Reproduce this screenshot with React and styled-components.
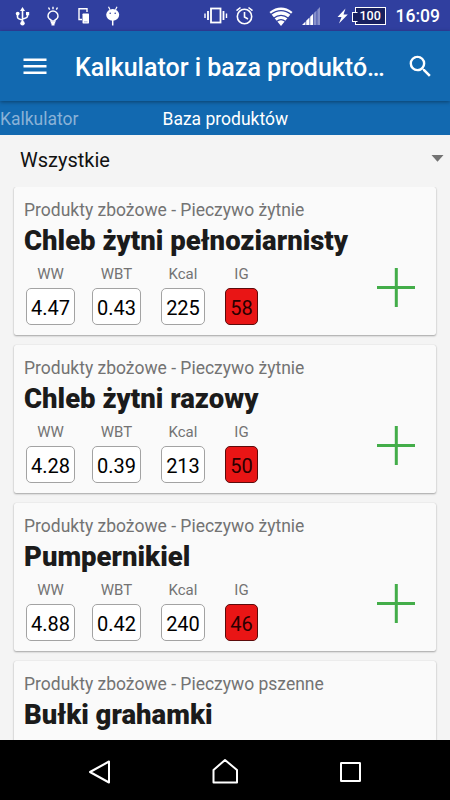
import React from "react"
import styled, { createGlobalStyle } from "styled-components"

const GlobalStyle = createGlobalStyle`
  * {
    box-sizing: border-box;
  }
  body {
    margin: 0;
    font-family: Roboto, "Noto Sans", sans-serif;
  }
  svg {
    display: block;
    flex: none;
  }
`

const StyledScreen = styled.div`
  display: flex;
  flex-direction: column;
  width: 450px;
  height: 800px;
  overflow: hidden;
  background-color: #f4f4f4;
`

const StyledStatusBar = styled.div`
  display: flex;
  align-items: center;
  flex: none;
  height: 31px;
  background-color: #303f9f;
  color: #fff;
`

const StyledNotifications = styled.div`
  display: flex;
  align-items: center;
  flex: 1;
  gap: 15px;
  padding-left: 15px;
`

const StyledSystem = styled.div`
  display: flex;
  align-items: center;
  padding-right: 10px;
`

const StyledNetwork = styled.div`
  display: flex;
  align-items: center;
  gap: 9px;
  margin: 0 17px 0 15px;
`

const StyledAlerts = styled.div`
  display: flex;
  align-items: center;
  gap: 7px;
`

const StyledBattery = styled.div`
  display: flex;
  align-items: center;
  justify-content: center;
  position: relative;
  width: 31px;
  height: 18px;
  margin-left: 7px;
  border: 1.5px solid #fff;
  background-color: #18205f;
  font-size: 12.5px;
  font-weight: 500;
  line-height: 16px;
  &::before {
    content: "";
    position: absolute;
    left: -4px;
    top: 4px;
    width: 4px;
    height: 8px;
    border: 1px solid #fff;
    border-right-color: #18205f;
    background-color: #18205f;
  }
`

const StyledClock = styled.span`
  margin-left: 10px;
  font-size: 17.5px;
  line-height: 31px;
  font-weight: 500;
  padding-top: 2px;
`

const StyledAppBar = styled.header`
  display: flex;
  align-items: center;
  flex: none;
  position: relative;
  height: 70px;
  padding: 0 15px 0 21px;
  background-color: #1269b0;
  color: #fff;
  box-shadow: 0 1px 4px rgba(0, 0, 0, 0.4);
`

const StyledHeading = styled.h1`
  flex: 1;
  margin: 4px 18px 0 26px;
  font-size: 25px;
  font-weight: 500;
  line-height: 34px;
  white-space: nowrap;
`

const StyledTabs = styled.nav`
  display: flex;
  flex: none;
  height: 34px;
  background-color: #1269b0;
`

const StyledTab = styled.div`
  width: ${(props) => (props.$active ? "125px" : "162.5px")};
  padding-top: 1px;
  font-size: 17.5px;
  line-height: 34px;
  white-space: nowrap;
  color: ${(props) => (props.$active ? "#fff" : "#8ab2d7")};
`

const StyledSelect = styled.div`
  display: flex;
  align-items: center;
  justify-content: space-between;
  flex: none;
  height: 52px;
  padding: 0 6px 3px 20px;
  font-size: 20px;
  color: #111;
  svg {
    margin-bottom: 2px;
  }
`

const StyledList = styled.main`
  display: flex;
  flex-direction: column;
  flex: 1;
  gap: 10px;
  min-height: 0;
  padding: 0 14px;
  overflow: hidden;
`

const StyledCard = styled.article`
  display: flex;
  flex: none;
  height: 148px;
  padding: 11px 20px 0 10px;
  border-radius: 2px;
  background-color: #fafafa;
  box-shadow: 0 1px 2px rgba(0, 0, 0, 0.32), 0 0 1px rgba(0, 0, 0, 0.16);
`

const StyledInfo = styled.div`
  flex: 1;
  white-space: nowrap;
`

const StyledCategory = styled.p`
  margin: 0;
  font-size: 17.5px;
  line-height: 24px;
  color: #737373;
`

const StyledName = styled.h2`
  margin: 0;
  font-size: 27.5px;
  font-weight: 900;
  line-height: 38px;
  color: #1b1b1b;
`

const StyledValues = styled.div`
  display: flex;
  margin: 4px 0 0 2px;
`

const StyledValue = styled.div`
  display: flex;
  flex-direction: column;
  align-items: center;
  margin-right: ${(props) => props.$gap}px;
  span {
    font-size: 15px;
    line-height: 20px;
    color: #737373;
  }
  strong {
    width: ${(props) => props.$width}px;
    height: 37px;
    margin-top: 4px;
    border: 1px solid ${(props) => (props.$alert ? "#5c0b0b" : "#a3a3a3")};
    border-radius: 5px;
    background-color: ${(props) => (props.$alert ? "#e91515" : "#fff")};
    font-size: 20px;
    font-weight: 400;
    line-height: 38px;
    text-align: center;
    color: ${(props) => (props.$alert ? "#2a0000" : "#000")};
  }
`

const StyledAdd = styled.div`
  margin-top: 70px;
`

const StyledNavBar = styled.footer`
  display: flex;
  align-items: center;
  justify-content: center;
  gap: 98px;
  flex: none;
  height: 60px;
  padding-top: 4px;
  background-color: #000;
`

const products = [
  { category: "Produkty zbożowe - Pieczywo żytnie", name: "Chleb żytni pełnoziarnisty", ww: "4.47", wbt: "0.43", kcal: "225", ig: "58" },
  { category: "Produkty zbożowe - Pieczywo żytnie", name: "Chleb żytni razowy", ww: "4.28", wbt: "0.39", kcal: "213", ig: "50" },
  { category: "Produkty zbożowe - Pieczywo żytnie", name: "Pumpernikiel", ww: "4.88", wbt: "0.42", kcal: "240", ig: "46" },
  { category: "Produkty zbożowe - Pieczywo pszenne", name: "Bułki grahamki" },
]

function StatusBar() {
  return (
    <StyledStatusBar>
      <StyledNotifications>
        <svg width="16" height="20" viewBox="0 0 16 20" fill="none" stroke="#fff" strokeWidth="1.6">
          <path d="M7.5 4v12M2.5 8v3q0 2 5 3M12.5 8v2q0 2-5 3" />
          <path d="M7.5 1L10 5H5zM11 6h3.2v3.2H11z" fill="#fff" stroke="none" />
          <circle cx="2.7" cy="7.6" r="1.9" fill="#fff" stroke="none" />
          <circle cx="7.5" cy="17.3" r="2.2" fill="#fff" stroke="none" />
        </svg>
        <svg width="16" height="20" viewBox="0 0 16 20" fill="none" stroke="#fff" strokeWidth="1.4">
          <path d="M5 15v-1C3 13 2 11.6 2 10a5 5 0 0 1 10 0c0 1.6-1 3-3 4v1z" />
          <path d="M4.8 16.5h4.4M5.5 18.5h3" strokeWidth="2" />
          <path d="M7 .7v2.6M2.5 1.5l1.2 2.2M11.5 1.5l-1.2 2.2" />
        </svg>
        <svg width="13" height="20" viewBox="0 0 13 20">
          <path d="M5 13.5H2V2.7h8V6" fill="none" stroke="#fff" strokeWidth="1.4" />
          <rect x="5.5" y="7.5" width="6.5" height="10" rx="0.7" fill="#fff" />
          <path d="M7 15.8h3.5" stroke="#9ba3d4" strokeWidth="0.8" />
        </svg>
        <svg width="16" height="20" viewBox="0 0 16 20">
          <path d="M3.5.8l1.5 3M12 .8l-1.5 3" stroke="#fff" strokeWidth="1.2" />
          <ellipse cx="7.7" cy="8.8" rx="6.5" ry="5.9" fill="#fff" />
          <circle cx="5.2" cy="7.2" r="0.8" fill="#303f9f" />
          <circle cx="10.2" cy="7.2" r="0.8" fill="#303f9f" />
          <path d="M7.7 14v5.5" stroke="#fff" strokeWidth="1.5" />
        </svg>
      </StyledNotifications>
      <StyledSystem>
        <StyledAlerts>
          <svg width="24" height="20" viewBox="0 0 24 20" fill="none" stroke="#fff">
            <rect x="7" y="2.5" width="9.5" height="14" strokeWidth="1.8" />
            <path d="M4 5v9M19.5 5v9" strokeWidth="1.8" />
            <path d="M1 7.5v4.5M22.5 7.5v4.5" strokeWidth="1.4" />
          </svg>
          <svg width="19" height="20" viewBox="0 0 19 20" fill="none" stroke="#fff" strokeWidth="1.6">
            <circle cx="9.5" cy="10.5" r="7.2" />
            <path d="M9.5 6v5l3.5 2M1.5 4.7L5.5 1.5M17.5 4.7l-4-3.2" />
          </svg>
        </StyledAlerts>
        <StyledNetwork>
          <svg width="24" height="20" viewBox="0 0 24 20">
            <path d="M.5 6Q12-2.8 23.5 6L12 20z" fill="#fff" />
            <path d="M1.5 8.7Q12 .7 22.5 8.7M4.5 12.2Q12 6.5 19.5 12.2M7.5 15.4Q12 12 16.5 15.4" fill="none" stroke="#303f9f" strokeWidth="1.2" />
          </svg>
          <svg width="18" height="20" viewBox="0 0 18 20">
            <path d="M0 19L3.5 15.5V19zM4.2 19V14.8L7.5 11.5V19zM8.2 19V10.8L11.2 7.8V19z" fill="#fff" />
            <path d="M11.9 19V7.1L14.6 4.4V19zM15.3 19V3.7L18 1V19z" fill="#8790ca" />
          </svg>
        </StyledNetwork>
        <svg width="11" height="16" viewBox="0 0 11 16">
          <path d="M8.5.5L.5 9h4L2 15.5L10.8 6.5H6.5z" fill="#fff" />
        </svg>
        <StyledBattery>100</StyledBattery>
        <StyledClock>16:09</StyledClock>
      </StyledSystem>
    </StyledStatusBar>
  )
}

function ProductCard({ product }) {
  return (
    <StyledCard>
      <StyledInfo>
        <StyledCategory>{product.category}</StyledCategory>
        <StyledName>{product.name}</StyledName>
        {product.ww && (
          <StyledValues>
            <StyledValue $width={49} $gap={17}>
              <span>WW</span>
              <strong>{product.ww}</strong>
            </StyledValue>
            <StyledValue $width={49} $gap={20}>
              <span>WBT</span>
              <strong>{product.wbt}</strong>
            </StyledValue>
            <StyledValue $width={44} $gap={20}>
              <span>Kcal</span>
              <strong>{product.kcal}</strong>
            </StyledValue>
            <StyledValue $width={33} $gap={0} $alert>
              <span>IG</span>
              <strong>{product.ig}</strong>
            </StyledValue>
          </StyledValues>
        )}
      </StyledInfo>
      {product.ww && (
        <StyledAdd>
          <svg width="40" height="40" viewBox="0 0 40 40" stroke="#43ad49" strokeWidth="3">
            <path d="M1 19.5h38M20.3 0v39" />
          </svg>
        </StyledAdd>
      )}
    </StyledCard>
  )
}

export default function App() {
  return (
    <>
      <GlobalStyle />
      <StyledScreen>
        <StatusBar />
        <StyledAppBar>
          <svg width="28" height="20" viewBox="0 0 28 20" stroke="#fff" strokeWidth="2.5">
            <path d="M2.5 3.7h23M2.5 10.2h23M2.5 16.7h23" />
          </svg>
          <StyledHeading>Kalkulator i baza produktó…</StyledHeading>
          <svg width="29" height="29" viewBox="0 0 24 24" fill="#fff">
            <path d="M15.5 14h-.79l-.28-.27A6.47 6.47 0 0 0 16 9.5 6.5 6.5 0 1 0 9.5 16c1.61 0 3.09-.59 4.23-1.57l.27.28v.79l5 4.99L20.49 19l-4.99-5zm-6 0C7.01 14 5 11.99 5 9.5S7.01 5 9.5 5 14 7.01 14 9.5 11.99 14 9.5 14z" />
          </svg>
        </StyledAppBar>
        <StyledTabs>
          <StyledTab>Kalkulator</StyledTab>
          <StyledTab $active>Baza produktów</StyledTab>
        </StyledTabs>
        <StyledSelect>
          Wszystkie
          <svg width="13" height="7" viewBox="0 0 13 7">
            <path d="M.5 0h12L6.5 6.7z" fill="#737373" />
          </svg>
        </StyledSelect>
        <StyledList>
          {products.map((product) => (
            <ProductCard key={product.name} product={product} />
          ))}
        </StyledList>
        <StyledNavBar>
          <svg width="26" height="28" viewBox="0 0 26 28" fill="none" stroke="#fff" strokeWidth="2">
            <path d="M3 14L22 3.5v21z" strokeLinejoin="round" />
          </svg>
          <svg width="28" height="28" viewBox="0 0 28 28" fill="none" stroke="#fff" strokeWidth="2">
            <path d="M2.5 24.5V12L14 2L26 12v12.5z" strokeLinejoin="round" />
          </svg>
          <svg width="26" height="28" viewBox="0 0 26 28" fill="none" stroke="#fff" strokeWidth="2">
            <rect x="4" y="5" width="19" height="18" rx="0.3" />
          </svg>
        </StyledNavBar>
      </StyledScreen>
    </>
  )
}
